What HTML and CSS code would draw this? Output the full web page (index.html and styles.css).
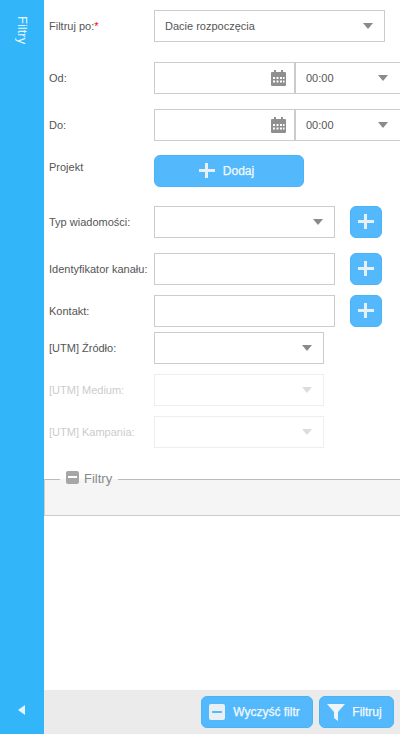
FILE: index.html
```html
<!DOCTYPE html>
<html lang="pl">
<head>
<meta charset="utf-8">
<title>Filtry</title>
<link rel="stylesheet" href="styles.css">
</head>
<body>
<div class="panel">
  <aside class="side">
    <span class="side-title">Filtry</span>
    <span class="side-arrow"></span>
  </aside>
  <div class="content">
    <form class="form">
      <div class="row row-first">
        <label class="lbl">Filtruj po:<span class="req">*</span></label>
        <div class="sel sel-main"><span class="val">Dacie rozpoczęcia</span><i class="caret"></i></div>
      </div>
      <div class="row row-od">
        <label class="lbl">Od:</label>
        <div class="date">
          <svg class="cal" width="15" height="16" viewBox="0 0 15 16"><path fill="#8f8f8f" fill-rule="evenodd" d="M3 0h2v2h5V0h2v2h2a1 1 0 0 1 1 1v12a1 1 0 0 1-1 1H1a1 1 0 0 1-1-1V3a1 1 0 0 1 1-1h2zM2 7v2h2V7zm3.500 0v2h2V7zM9 7v2h2V7zm3 0v2h1.500V7zM2 10.500v2h2v-2zm3.500 0v2h2v-2zm3.500 0v2h2v-2zm3 0v2h1.500v-2z"/></svg>
        </div>
        <div class="time"><span class="val">00:00</span><i class="caret"></i></div>
      </div>
      <div class="row row-do">
        <label class="lbl">Do:</label>
        <div class="date">
          <svg class="cal" width="15" height="16" viewBox="0 0 15 16"><path fill="#8f8f8f" fill-rule="evenodd" d="M3 0h2v2h5V0h2v2h2a1 1 0 0 1 1 1v12a1 1 0 0 1-1 1H1a1 1 0 0 1-1-1V3a1 1 0 0 1 1-1h2zM2 7v2h2V7zm3.500 0v2h2V7zM9 7v2h2V7zm3 0v2h1.500V7zM2 10.500v2h2v-2zm3.500 0v2h2v-2zm3.500 0v2h2v-2zm3 0v2h1.500v-2z"/></svg>
        </div>
        <div class="time"><span class="val">00:00</span><i class="caret"></i></div>
      </div>
      <div class="row row-proj">
        <label class="lbl lbl-top">Projekt</label>
        <button type="button" class="btn btn-add"><i class="plus plus-big"></i>Dodaj</button>
      </div>
      <div class="row row-typ">
        <label class="lbl">Typ wiadomości:</label>
        <div class="sel sel-wide"><i class="caret"></i></div>
        <button type="button" class="btn btn-sq"><i class="plus"></i></button>
      </div>
      <div class="row row-kanal">
        <label class="lbl">Identyfikator kanału:</label>
        <div class="sel sel-wide"></div>
        <button type="button" class="btn btn-sq"><i class="plus"></i></button>
      </div>
      <div class="row row-kontakt">
        <label class="lbl">Kontakt:</label>
        <div class="sel sel-wide"></div>
        <button type="button" class="btn btn-sq"><i class="plus"></i></button>
      </div>
      <div class="row row-zrodlo">
        <label class="lbl">[UTM] Źródło:</label>
        <div class="sel sel-utm"><i class="caret"></i></div>
      </div>
      <div class="row row-medium off">
        <label class="lbl">[UTM] Medium:</label>
        <div class="sel sel-utm"><i class="caret"></i></div>
      </div>
      <div class="row row-kampania off">
        <label class="lbl">[UTM] Kampania:</label>
        <div class="sel sel-utm"><i class="caret"></i></div>
      </div>
      <fieldset class="group">
        <legend class="group-title"><i class="minus minus-raised"></i>Filtry</legend>
      </fieldset>
    </form>
    <div class="bar">
      <button type="button" class="btn btn-bar btn-clear"><i class="minus minus-light"></i>Wyczyść filtr</button>
      <button type="button" class="btn btn-bar btn-run">
        <svg class="funnel" width="18" height="17" viewBox="0 0 18 17"><path fill="#eef4f8" d="M0 0h18L11 8v9l-4-3V8z"/></svg>Filtruj</button>
    </div>
  </div>
</div>
</body>
</html>
```
FILE: styles.css
```css
html, body { margin: 0; height: 100%; }
body { font-family: "Liberation Sans", Arial, sans-serif; font-size: 11px; color: #555; overflow: hidden; background: #fff; }

.panel { display: flex; height: 734px; width: 400px; overflow: hidden; }

.side { width: 44px; flex: none; background: #33b5f9; display: flex; flex-direction: column; align-items: center; justify-content: space-between; }
.side-title { writing-mode: vertical-rl; color: #fff; font-size: 13px; margin-top: 16px; opacity: .9; }
.side-arrow { width: 0; height: 0; border-style: solid; border-width: 5px 7px 5px 0; border-color: transparent #e3f4fe transparent transparent; margin-bottom: 19px; margin-right: 1px; }

.content { flex: 1; min-width: 0; display: flex; flex-direction: column; }
.form { flex: 1; min-height: 0; }

.row { display: flex; align-items: center; padding-left: 5px; }
.row-first { margin-top: 10px; }
.row-od { margin-top: 20px; }
.row-do { margin-top: 15px; }
.row-proj { margin-top: 14px; align-items: flex-start; }
.row-typ { margin-top: 19px; }
.row-kanal { margin-top: 15px; }
.row-kontakt { margin-top: 10px; }
.row-zrodlo { margin-top: 5px; }
.row-medium, .row-kampania { margin-top: 10px; }

.lbl { width: 105px; flex: none; line-height: 14px; }
.lbl-top { padding-top: 5px; }
.req { color: #f00; }

.sel, .date, .time { box-sizing: border-box; height: 32px; border: 1px solid #ccc; background: #fff; display: flex; align-items: center; justify-content: space-between; flex: none; }
.sel-main { width: 231px; padding: 0 11px 0 10px; }
.sel-wide { width: 181px; padding-right: 11px; justify-content: flex-end; }
.sel-utm { width: 170px; padding-right: 11px; justify-content: flex-end; }
.date { width: 141px; padding-right: 9px; justify-content: flex-end; border-right-width: 0; }
.time { width: 110px; margin-left: -1px; border-left-width: 2px; padding: 0 15px 0 10px; }
.val { font-size: 11px; color: #555; }

.caret { width: 0; height: 0; border-style: solid; border-width: 6px 5px 0 5px; border-color: #8a8a8a transparent transparent transparent; }

.off .lbl { color: #ccc; }
.off .sel { border-color: #eee; }
.off .caret { border-top-color: #ddd; }

.btn { box-sizing: border-box; height: 32px; background: #53b9fc; border: 1px solid #4bb3f8; border-radius: 6px; color: #f4f9fc; font-family: inherit; font-size: 12px; -webkit-text-stroke: .25px #f4f9fc; display: flex; align-items: center; justify-content: center; padding: 0; }
.btn-add { width: 150px; padding-right: 5px; }
.btn-sq { width: 32px; margin-left: 15px; }

.plus { position: relative; display: block; width: 16px; height: 16px; }
.plus::before, .plus::after { content: ""; position: absolute; background: #e9f0f5; }
.plus::before { left: 0; right: 0; top: 6px; height: 3px; }
.plus::after { top: 0; bottom: 1px; left: 6px; width: 3px; }
.plus-big { margin-right: 8px; }

.group { margin: 24px 0 0; padding: 0; height: 44px; box-sizing: border-box; border: 1px solid #ccc; border-top-color: #bbb; border-right-width: 0; background: #f5f5f5; }
.group-title { margin-left: 15px; padding: 0 6px; font-size: 13px; color: #888; display: flex; align-items: center; gap: 5px; line-height: 14px; }

.minus { position: relative; display: block; width: 13px; height: 13px; border-radius: 2px; background: #a6a6a6; }
.minus::after { content: ""; position: absolute; left: 2px; right: 2px; top: 5px; height: 2px; background: #fff; }
.minus-raised { transform: translateY(-2px); }
.minus-light { width: 16px; height: 16px; background: #e9f0f5; margin-right: 8px; }
.minus-light::after { left: 3px; right: 3px; top: 7px; height: 2px; background: #53b9fc; }

.bar { height: 44px; flex: none; background: #ebebeb; display: flex; justify-content: flex-end; align-items: center; gap: 6px; padding-right: 6px; }
.btn-clear { width: 112px; padding-right: 5px; }
.btn-run { width: 75px; padding-right: 4px; }
.funnel { margin-right: 7px; }
```
